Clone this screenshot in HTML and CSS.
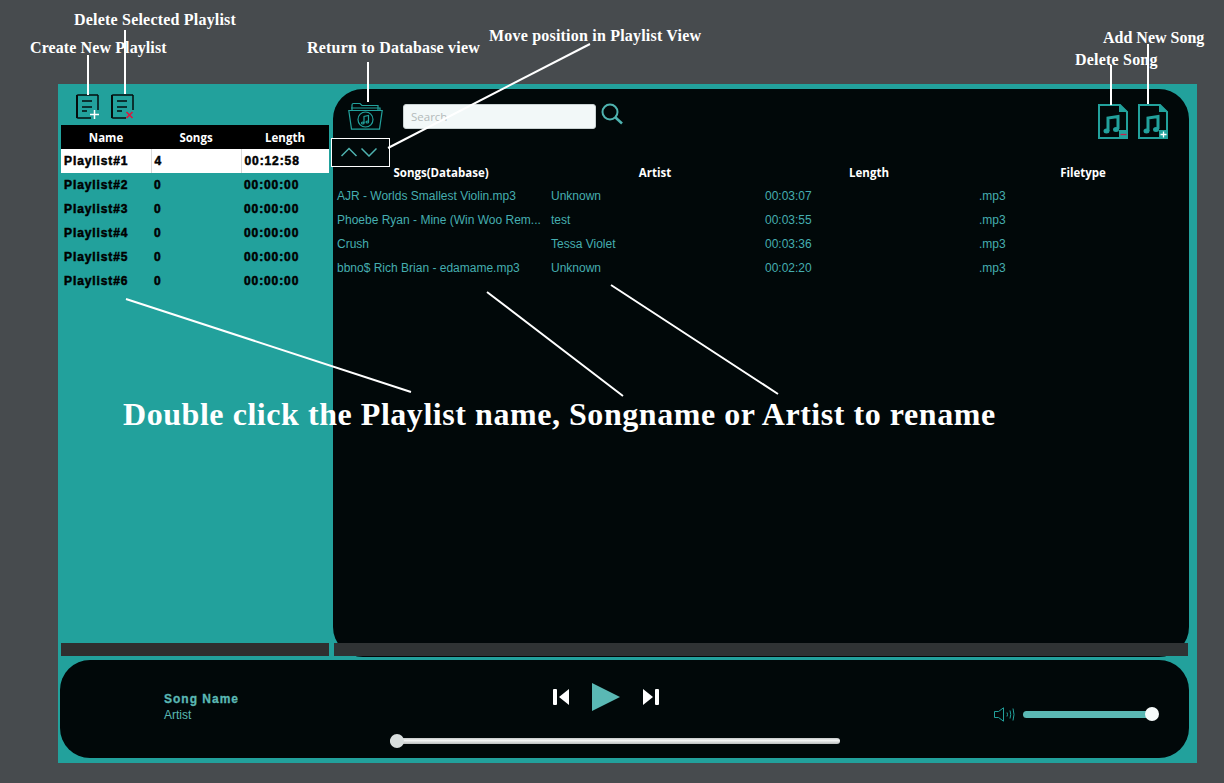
FILE: index.html
```html
<!DOCTYPE html>
<html lang="en">
<head>
  <meta charset="UTF-8">
  <title>Music Player Help</title>
  <link rel="stylesheet" href="styles.css">
</head>
<body>
  <div class="frame">
    <div class="top">
      <aside class="sidebar">
        <div class="playlist-tools">
          <svg class="tool-icon" viewBox="0 0 24 26">
            <path d="M22 1H2Q1 1 1 2V23Q1 24 2 24H15M22 1V16" fill="none" stroke="#050c0c" stroke-width="1.500"/>
            <path d="M1 1V24" stroke="#050c0c" stroke-width="2"/>
            <path d="M6 7H16M6 13H16M6 17H11" stroke="#050c0c" stroke-width="1.600"/>
            <path d="M18.500 16V25M14 20.500H23" stroke="#fff" stroke-width="1.500"/>
          </svg>
          <svg class="tool-icon" viewBox="0 0 24 26">
            <path d="M22 1H2Q1 1 1 2V23Q1 24 2 24H15M22 1V16" fill="none" stroke="#050c0c" stroke-width="1.500"/>
            <path d="M1 1V24" stroke="#050c0c" stroke-width="2"/>
            <path d="M6 7H16M6 13H16M6 17H11" stroke="#050c0c" stroke-width="1.600"/>
            <path d="M15.500 18L21.500 24M21.500 18L15.500 24" stroke="#e0143c" stroke-width="1.600"/>
          </svg>
        </div>
        <table class="playlists">
          <thead>
            <tr><th>Name</th><th>Songs</th><th>Length</th></tr>
          </thead>
          <tbody>
            <tr class="selected"><td>Playlist#1</td><td>4</td><td>00:12:58</td></tr>
            <tr><td>Playlist#2</td><td>0</td><td>00:00:00</td></tr>
            <tr><td>Playlist#3</td><td>0</td><td>00:00:00</td></tr>
            <tr><td>Playlist#4</td><td>0</td><td>00:00:00</td></tr>
            <tr><td>Playlist#5</td><td>0</td><td>00:00:00</td></tr>
            <tr><td>Playlist#6</td><td>0</td><td>00:00:00</td></tr>
          </tbody>
        </table>
        <div class="scrollbar"></div>
      </aside>

      <main class="panel">
        <div class="toolbar">
          <svg class="folder-icon" viewBox="0 0 35 28" fill="none" stroke="#22a19c" stroke-width="1.200">
            <path d="M4 8V3Q4 1.500 5.500 1.500H12L14 3.500H30V8"/>
            <path d="M3 6H32V8"/>
            <path d="M0.800 8.500H34.200L31.500 27.200H3.500Z"/>
            <circle cx="17.500" cy="17.500" r="7.500"/>
            <path d="M16 21V14.500L20.500 13.500V20"/>
            <ellipse cx="14.800" cy="21" rx="1.300" ry="1"/>
            <ellipse cx="19.300" cy="20" rx="1.300" ry="1"/>
          </svg>
          <input class="search" type="text" placeholder="Search">
          <svg class="search-icon" viewBox="0 0 22 22" fill="none" stroke="#4fb3b0" stroke-width="2">
            <circle cx="9" cy="9" r="7.500"/>
            <path d="M14.500 14.500L21 20.500" stroke-width="2.500"/>
          </svg>
          <div class="song-tools">
            <svg class="song-icon" viewBox="0 0 30 35">
              <path d="M29 8V34H1V1H22Z" fill="none" stroke="#22a19c" stroke-width="2"/>
              <path d="M21 0L30 8H21Z" fill="#22a19c"/>
              <path d="M10 27V14L20 12.500V25" fill="none" stroke="#22a19c" stroke-width="3"/>
              <ellipse cx="8.500" cy="27" rx="3" ry="2.500" fill="#22a19c"/>
              <ellipse cx="18" cy="25.500" rx="3" ry="2.500" fill="#22a19c"/>
              <rect x="21" y="26" width="9" height="9" fill="#22a19c"/>
              <path d="M22.500 30.500H28.500" stroke="#c8204a" stroke-width="1.300"/>
            </svg>
            <svg class="song-icon" viewBox="0 0 30 35">
              <path d="M29 8V34H1V1H22Z" fill="none" stroke="#22a19c" stroke-width="2"/>
              <path d="M21 0L30 8H21Z" fill="#22a19c"/>
              <path d="M10 27V14L20 12.500V25" fill="none" stroke="#22a19c" stroke-width="3"/>
              <ellipse cx="8.500" cy="27" rx="3" ry="2.500" fill="#22a19c"/>
              <ellipse cx="18" cy="25.500" rx="3" ry="2.500" fill="#22a19c"/>
              <rect x="21" y="26" width="9" height="9" fill="#22a19c"/>
              <path d="M22.500 30.500H28.500M25.500 27.500V33.500" stroke="#fff" stroke-width="1.300"/>
            </svg>
          </div>
        </div>

        <div class="move-box">
          <svg class="chevrons" viewBox="0 0 36 10" fill="none" stroke="#4fb3b0" stroke-width="1.500">
            <path d="M0.500 9L8 1.500L15.500 9"/>
            <path d="M20.500 1.500L28 9L35.500 1.500"/>
          </svg>
        </div>

        <table class="songs">
          <thead>
            <tr><th>Songs(Database)</th><th>Artist</th><th>Length</th><th>Filetype</th></tr>
          </thead>
          <tbody>
            <tr><td>AJR - Worlds Smallest Violin.mp3</td><td>Unknown</td><td>00:03:07</td><td>.mp3</td></tr>
            <tr><td>Phoebe Ryan - Mine (Win Woo Rem...</td><td>test</td><td>00:03:55</td><td>.mp3</td></tr>
            <tr><td>Crush</td><td>Tessa Violet</td><td>00:03:36</td><td>.mp3</td></tr>
            <tr><td>bbno$ Rich Brian - edamame.mp3</td><td>Unknown</td><td>00:02:20</td><td>.mp3</td></tr>
          </tbody>
        </table>
        <div class="scrollbar panel-scrollbar"></div>
      </main>
    </div>

    <footer class="player">
      <div class="now-playing">
        <div class="song-name">Song Name</div>
        <div class="song-artist">Artist</div>
      </div>
      <div class="transport">
        <div class="controls">
          <svg class="skip" viewBox="0 0 16 16" fill="#fff">
            <rect x="0" y="0" width="4" height="16" rx="1"/>
            <path d="M16 0V16L6 8Z"/>
          </svg>
          <svg class="play" viewBox="0 0 28 28" fill="#5ab8b4">
            <path d="M0 0L28 14L0 28Z"/>
          </svg>
          <svg class="skip" viewBox="0 0 16 16" fill="#fff">
            <path d="M0 0V16L10 8Z"/>
            <rect x="12" y="0" width="4" height="16" rx="1"/>
          </svg>
        </div>
        <div class="seek">
          <div class="seek-thumb"></div>
        </div>
      </div>
      <div class="volume">
        <svg class="speaker" viewBox="0 0 21 15" fill="none" stroke="#22a19c" stroke-width="1">
          <path d="M0.500 4.500H4.500L9.500 0.800V14.200L4.500 10.500H0.500Z"/>
          <path d="M13 5.500Q14 7.500 13 9.500M16 3.500Q17.500 7.500 16 11.500M19 1.500Q21 7.500 19 13.500"/>
        </svg>
        <div class="volume-bar">
          <div class="volume-thumb"></div>
        </div>
      </div>
    </footer>
  </div>

  <!-- help annotations drawn over the app -->
  <svg class="callouts" viewBox="0 0 1224 783" stroke="#fff" stroke-width="2" fill="none">
    <path d="M88 55V95M125 30V94M368 62V102M1111 65V105M1148 44V104"/>
    <path d="M590 44L388 148"/>
    <path d="M126 299L411 392M487 292L623 396M611 285L778 394"/>
  </svg>
  <div class="note note-create">Create New Playlist</div>
  <div class="note note-delete">Delete Selected Playlist</div>
  <div class="note note-return">Return to Database view</div>
  <div class="note note-move">Move position in Playlist View</div>
  <div class="note note-add">Add New Song</div>
  <div class="note note-remove">Delete Song</div>
  <div class="note note-main">Double click the Playlist name, Songname or Artist to rename</div>
</body>
</html>
```

FILE: styles.css
```css
html, body {
  margin: 0;
  height: 783px;
  overflow: hidden;
}

body {
  position: relative;
  background: #474b4e;
  padding: 84px 0 0 58px;
  box-sizing: border-box;
  font-family: "Liberation Sans", sans-serif;
}

.frame {
  width: 1139px;
  height: 679px;
  box-sizing: border-box;
  padding: 5px 8px 5px 2px;
  background: #22a19c;
  display: flex;
  flex-direction: column;
}

.top {
  display: flex;
  height: 568px;
}

/* left column */
.sidebar {
  width: 273px;
  padding-left: 1px;
  box-sizing: border-box;
  display: flex;
  flex-direction: column;
}

.playlist-tools {
  display: flex;
  gap: 11px;
  height: 36px;
  padding: 5px 0 0 15px;
  box-sizing: border-box;
}

.tool-icon {
  width: 24px;
  height: 26px;
}

table {
  border-collapse: collapse;
  table-layout: fixed;
}

.playlists {
  width: 268px;
}

.playlists th {
  height: 24px;
  padding: 0;
  background: #000;
  color: #fff;
  font-family: "Open Sans", sans-serif;
  font-size: 11.5px;
  font-weight: 700;
  text-align: center;
}

.playlists th:nth-child(3) {
  width: 88px;
}

.playlists td {
  height: 24px;
  padding: 0 0 0 3px;
  color: #000;
  font-size: 12px;
  font-weight: 700;
  letter-spacing: 0.9px;
  -webkit-text-stroke: 0.5px currentColor;
}

.playlists .selected td {
  background: #fff;
  border-right: 1px solid #d9d9d9;
}

.playlists .selected td:last-child {
  border-right: 0;
}

.scrollbar {
  height: 13px;
  margin-top: auto;
  margin-bottom: 1px;
  width: 268px;
  background: #2f2f2f;
}

/* main panel */
.panel {
  position: relative;
  width: 856px;
  background: #010809;
  border-radius: 30px;
  display: flex;
  flex-direction: column;
}

.panel-scrollbar {
  width: 854px;
  margin-left: 1px;
  background: #2f3334;
}

.toolbar {
  height: 76px;
  box-sizing: border-box;
  padding: 13px 21px 0 15px;
  display: flex;
  align-items: flex-start;
}

.folder-icon {
  width: 35px;
  height: 28px;
  margin-right: 20px;
}

.search {
  width: 193px;
  height: 25px;
  margin: 2px 5px 0 0;
  padding: 0 7px;
  box-sizing: border-box;
  border: 1px solid #c9d2d2;
  border-radius: 3px;
  background: #f2f8f8;
  font-family: "Open Sans", sans-serif;
  font-size: 11.5px;
}

.search::placeholder {
  color: #b2baba;
}

.search-icon {
  width: 22px;
  height: 22px;
  margin-top: 1px;
}

.song-tools {
  margin-left: auto;
  margin-top: 2px;
  display: flex;
  gap: 10px;
}

.song-icon {
  width: 30px;
  height: 35px;
}

.move-box {
  position: absolute;
  left: -2px;
  top: 49px;
  width: 59px;
  height: 29px;
  box-sizing: border-box;
  border: 1px solid #fff;
  background: #010809;
  display: flex;
  padding: 8px 0 0 9px;
}

.chevrons {
  width: 36px;
  height: 10px;
}

.songs {
  width: 856px;
  margin-left: 1px;
}

.songs th {
  height: 15px;
  padding: 0 0 4px;
  color: #fff;
  font-family: "Open Sans", sans-serif;
  font-size: 11.5px;
  font-weight: 700;
  text-align: center;
}

.songs td {
  height: 24px;
  padding: 0 0 0 3px;
  color: #45aeb0;
  font-size: 12px;
  white-space: nowrap;
  overflow: hidden;
}

/* player */
.player {
  margin-top: 3px;
  height: 98px;
  background: #010809;
  border-radius: 30px;
  display: grid;
  grid-template-columns: 330px 450px 1fr;
}

.now-playing {
  padding: 32px 0 0 104px;
  color: #5ab8b4;
}

.song-name {
  font-size: 12px;
  font-weight: 700;
  line-height: 14px;
  letter-spacing: 1px;
  -webkit-text-stroke: 0.3px currentColor;
}

.song-artist {
  margin-top: 2px;
  font-size: 12px;
  line-height: 14px;
}

.transport {
  display: flex;
  flex-direction: column;
}

.controls {
  display: flex;
  align-items: center;
  height: 28px;
  margin-top: 23px;
  padding-left: 163px;
}

.skip {
  width: 16px;
  height: 16px;
}

.play {
  width: 28px;
  height: 28px;
  margin: 0 23px;
}

.seek {
  position: relative;
  height: 6px;
  margin-top: 27px;
  border-radius: 3px;
  background: linear-gradient(#c4c8c8, #f2f4f4 40%, #b8bcbc);
}

.seek-thumb {
  position: absolute;
  left: 0;
  top: -4px;
  width: 14px;
  height: 14px;
  border-radius: 50%;
  background: #d8dede;
}

.volume {
  display: flex;
  align-items: center;
  height: 15px;
  margin-top: 47px;
  padding-left: 154px;
}

.speaker {
  width: 21px;
  height: 15px;
  margin-right: 8px;
}

.volume-bar {
  position: relative;
  width: 135px;
  height: 7px;
  border-radius: 4px;
  background: #5ab8b4;
}

.volume-thumb {
  position: absolute;
  right: -1px;
  top: -4px;
  width: 14px;
  height: 14px;
  border-radius: 50%;
  background: #f6fbfb;
}

/* annotations */
.callouts {
  position: absolute;
  left: 0;
  top: 0;
  width: 1224px;
  height: 783px;
}

.note {
  position: absolute;
  color: #fff;
  font-family: "Liberation Serif", serif;
  font-size: 16px;
  font-weight: 700;
  letter-spacing: 0.2px;
  line-height: 18px;
  white-space: nowrap;
}

.note-create { left: 30px; top: 39px; letter-spacing: 0.1px; }
.note-delete { left: 74px; top: 11px; }
.note-return { left: 307px; top: 39px; }
.note-move { left: 489px; top: 27px; }
.note-add { left: 1103px; top: 29px; letter-spacing: 0; }
.note-remove { left: 1075px; top: 51px; }

.note-main {
  left: 123px;
  top: 396px;
  font-size: 32px;
  letter-spacing: 0.55px;
  line-height: 36px;
}
```
